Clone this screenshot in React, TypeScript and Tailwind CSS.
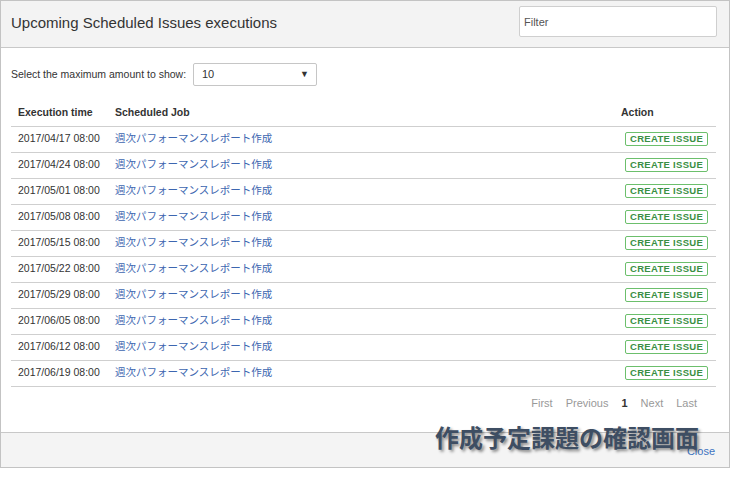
import { useState } from 'react';

const ROWS = [
  '2017/04/17 08:00',
  '2017/04/24 08:00',
  '2017/05/01 08:00',
  '2017/05/08 08:00',
  '2017/05/15 08:00',
  '2017/05/22 08:00',
  '2017/05/29 08:00',
  '2017/06/05 08:00',
  '2017/06/12 08:00',
  '2017/06/19 08:00',
];

const JOB = '週次パフォーマンスレポート作成';

export default function App() {
  const [filter, setFilter] = useState('');

  return (
    <div className="bg-white w-[738px] h-[477px] font-['Liberation_Sans','Noto_Sans_CJK_JP',sans-serif] text-[#333]">
      <div className="relative w-[730px] h-[468px] border border-[#c3c3c3] flex flex-col">
        {/* header */}
        <div className="h-[47px] shrink-0 bg-[#f3f3f3] border-b border-[#c8c8c8] flex items-start justify-between pl-[10px] pr-[12px]">
          <h1 className="mt-[11px] text-[15px] text-[#333]">Upcoming Scheduled Issues executions</h1>
          <input
            value={filter}
            onChange={(e) => setFilter(e.target.value)}
            placeholder="Filter"
            className="mt-[5px] w-[198px] h-[31px] border border-[#cfcfcf] rounded-[2px] bg-white px-[4px] text-[11px] placeholder:text-[#555] outline-none"
          />
        </div>

        {/* body */}
        <div className="flex-1 px-[10px]">
          <div className="flex items-center h-[23px] mt-[15px]">
            <span className="text-[10.5px] text-[#333] w-[182px]">Select the maximum amount to show:</span>
            <div className="w-[124px] h-[23px] border border-[#c6c6c6] rounded-[2px] flex items-center justify-between pl-[8px] pr-[7px]">
              <span className="text-[11px] text-[#333]">10</span>
              <span className="text-[9px] text-[#333]">▼</span>
            </div>
          </div>

          <table className="w-[705px] mt-[14px] border-collapse text-[10.5px]">
            <thead>
              <tr className="h-[26px] border-b border-[#cfcfcf]">
                <th className="text-left font-bold pl-[7px] w-[104px]">Execution time</th>
                <th className="text-left font-bold">Scheduled Job</th>
                <th className="text-left font-bold w-[95px] pl-[0px]">Action</th>
              </tr>
            </thead>
            <tbody>
              {ROWS.map((d) => (
                <tr key={d} className="h-[26px] border-b border-[#cfcfcf]">
                  <td className="pl-[7px] text-[#333]">{d}</td>
                  <td className="text-[#3d66b0]">{JOB}</td>
                  <td>
                    <span className="ml-[4px] inline-flex items-center h-[14px] px-[4px] border border-[#6cbf6c] rounded-[2px] text-[9.5px] font-bold tracking-[0.3px] text-[#3a8f44]">
                      CREATE ISSUE
                    </span>
                  </td>
                </tr>
              ))}
            </tbody>
          </table>

          <div className="flex justify-end gap-[13px] pr-[22px] mt-[8px] text-[11px] text-[#999]">
            <span>First</span>
            <span>Previous</span>
            <span className="font-bold text-[#333]">1</span>
            <span>Next</span>
            <span>Last</span>
          </div>
        </div>

        {/* footer */}
        <div className="h-[35px] shrink-0 bg-[#f4f4f4] border-t border-[#c8c8c8] flex items-end justify-end pr-[14px] pb-[8px]">
          <span className="text-[11px] text-[#3d73c0]">Close</span>
        </div>

        <div className="absolute left-[434px] top-[424px] text-[24px] leading-none font-bold text-[#3e4e63] font-['Noto_Sans_CJK_JP',sans-serif] [text-shadow:2px_2px_3px_rgba(0,0,0,0.45)]">
          作成予定課題の確認画面
        </div>
      </div>
    </div>
  );
}
